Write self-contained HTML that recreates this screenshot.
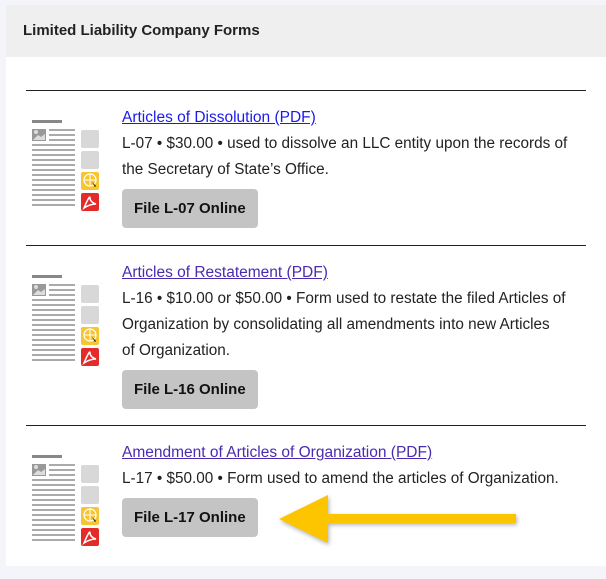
<!DOCTYPE html><html><head><style>
body{margin:0;width:606px;height:579px;background:#f4f5fa;font-family:"Liberation Sans",sans-serif;position:relative;overflow:hidden}
.panel{position:absolute;left:6px;top:5px;width:600px;height:561px;background:#fff}
.hdr{height:52px;background:#efefef;font-weight:bold;font-size:15px;color:#222;padding-left:17px;line-height:52px}
.hr{position:absolute;left:20px;width:560px;height:1px;background:#222}
.item{position:absolute;left:116px;font-size:15.3px;color:#222;line-height:26px;width:452px}
.item a{color:#4a2bb0;text-decoration:underline;font-size:15.5px}
.item a.b{color:#1a1aee}
.btn{display:inline-block;background:#c4c4c4;border-radius:4px;font-weight:bold;color:#111;font-size:15px;padding:0 12px;height:39px;line-height:39px;margin-top:6px}
.ic{position:absolute;left:26px}
</style></head><body>
<div class="panel"><div class="hdr">Limited Liability Company Forms</div>
<div class="hr" style="top:85px"></div>
<div class="hr" style="top:240px"></div>
<div class="hr" style="top:420px"></div>
</div>
<svg width="0" height="0" style="position:absolute"><defs><g id="doc">
<rect x="0" y="0" width="30" height="3" fill="#888"/>
<rect x="0" y="9" width="14" height="12" fill="#999"/><circle cx="4" cy="12" r="2" fill="#ddd"/><path d="M1 20 L6 15 L9 17 L13 14 L13 20Z" fill="#ddd"/>
<g fill="#aaa"><rect x="17" y="9" width="26" height="2"/><rect x="17" y="14" width="26" height="2"/><rect x="17" y="19" width="26" height="2"/>
<rect x="0" y="24" width="43" height="2"/><rect x="0" y="29" width="43" height="2"/><rect x="0" y="34" width="43" height="2"/><rect x="0" y="39" width="43" height="2"/><rect x="0" y="44" width="43" height="2"/><rect x="0" y="49" width="43" height="2"/><rect x="0" y="54" width="43" height="2"/><rect x="0" y="59" width="43" height="2"/><rect x="0" y="64" width="43" height="2"/><rect x="0" y="69" width="43" height="2"/><rect x="0" y="74" width="43" height="2"/><rect x="0" y="79" width="43" height="2"/><rect x="0" y="84" width="43" height="2"/></g>
<rect x="49" y="10" width="18" height="18" rx="2" fill="#d8d8d8"/>
<rect x="49" y="31" width="18" height="18" rx="2" fill="#d8d8d8"/>
<rect x="49" y="52" width="18" height="18" rx="2" fill="#f7c531"/><circle cx="58" cy="60" r="6" fill="none" stroke="#fff" stroke-width="1.2"/><path d="M52 60h12M58 54v12" stroke="#fff" stroke-width="1"/><path d="M60 62l4 4 -1 1z" fill="#111"/>
<rect x="49" y="73" width="18" height="18" rx="2" fill="#e52a2a"/><path d="M52 88 Q58 74 58 78 Q58 82 64 84 Q58 84 52 88Z" fill="none" stroke="#fff" stroke-width="1.5"/>
</g></defs></svg>
<svg class="ic" style="top:120px;left:32px" width="70" height="95"><use href="#doc"/></svg>
<svg class="ic" style="top:275px;left:32px" width="70" height="95"><use href="#doc"/></svg>
<svg class="ic" style="top:455px;left:32px" width="70" height="95"><use href="#doc"/></svg>
<div class="item" style="top:105px;left:122px"><a class="b">Articles of Dissolution (PDF)</a><br>L-07 • $30.00 • used to dissolve an LLC entity upon the records of the Secretary of State’s Office.<br><span class="btn">File L-07 Online</span></div>
<div class="item" style="top:260px;left:122px"><a>Articles of Restatement (PDF)</a><br>L-16 • $10.00 or $50.00 • Form used to restate the filed Articles of Organization by consolidating all amendments into new Articles<br>of Organization.<br><span class="btn">File L-16 Online</span></div>
<div class="item" style="top:440px;left:122px"><a>Amendment of Articles of Organization (PDF)</a><br>L-17 • $50.00 • Form used to amend the articles of Organization.<br><span class="btn">File L-17 Online</span></div>
<svg style="position:absolute;left:275px;top:490px" width="250" height="60"><path d="M4 29 L53 5 L53 24 L241 24 L241 33 L53 33 L53 53 Z" fill="#fdc500" style="filter:drop-shadow(1px 2px 2px rgba(0,0,0,.3))"/></svg>
</body></html>
